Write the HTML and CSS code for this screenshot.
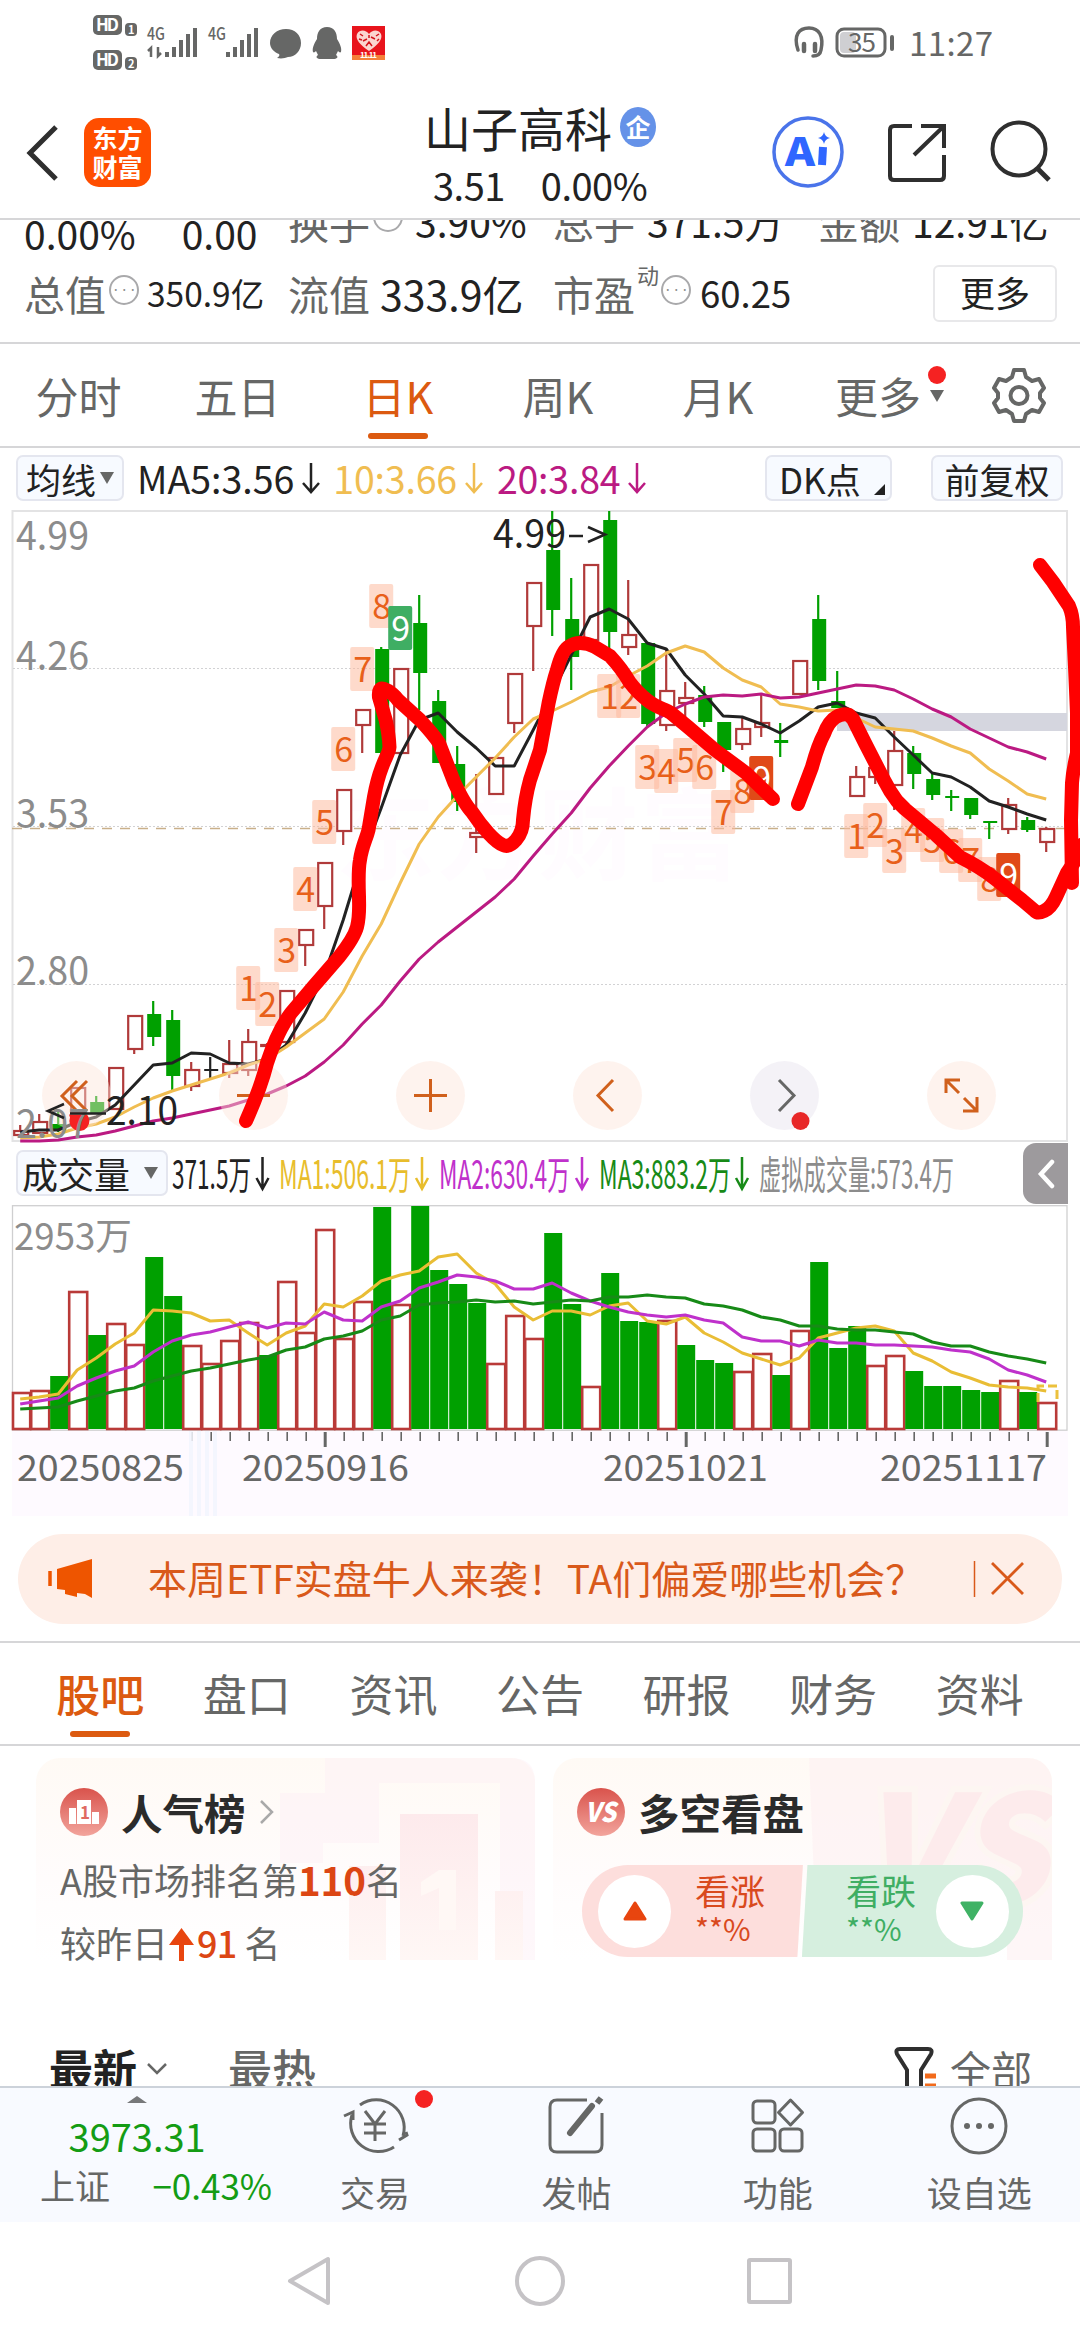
FILE: index.html
```
<!DOCTYPE html>
<html lang="zh-CN">

<head>
    <meta charset="UTF-8">
    <meta name="viewport" content="width=device-width, initial-scale=1.0">
    <title>山子高科 3.51</title>
    <link rel="stylesheet" href="styles.css">
</head>

<body>
    <!-- Status bar -->
    <div class="status">
        <svg class="status-left" width="300" height="60" viewBox="90 10 300 60">
            <g fill="#666766">
                <rect x="93" y="15" width="29" height="20" rx="5" />
                <rect x="125" y="23" width="12" height="13" rx="4" />
                <rect x="93" y="50" width="29" height="20" rx="5" />
                <rect x="125" y="57" width="12" height="13" rx="4" />
            </g>
            <g fill="#fff" font-weight="700">
                <text x="96" y="31" font-size="17" textLength="23">HD</text>
                <text x="128" y="34" font-size="11">1</text>
                <text x="96" y="66" font-size="17" textLength="23">HD</text>
                <text x="128" y="68" font-size="11">2</text>
            </g>
            <g fill="#666766" font-weight="500" font-size="17">
                <text x="147" y="40" textLength="18" lengthAdjust="spacingAndGlyphs">4G</text>
                <text x="208" y="40" textLength="18" lengthAdjust="spacingAndGlyphs">4G</text>
            </g>
            <g stroke="#666766" stroke-width="4">
                <path d="M167 57v-5M174 57V47M181 57V40M188 57V34M195 57V28" />
                <path d="M228 57v-5M235 57V47M242 57V40M249 57V34M256 57V28" />
            </g>
            <path d="M151 57V48l-3 3M158 47v9l3-3" fill="none" stroke="#666766" stroke-width="2.5" />
            <path d="M286 29c9 0 15 6 15 14s-6 14-13 14c-3 1-6 2-11 1 2-1 3-3 2-4-5-2-9-6-9-11 0-8 7-14 16-14z" fill="#666766" />
            <path d="M327 27c7 0 10 5 10 12 3 5 5 9 4 13-1 1-2 0-3-1l-2 4c3 2 1 4-3 4h-12c-4 0-6-2-3-4l-2-4c-1 1-2 2-3 1-1-4 1-8 4-13 0-7 3-12 10-12z" fill="#666766" />
            <rect x="352" y="26" width="33" height="34" fill="#e8141c" />
            <rect x="352" y="55" width="33" height="5" fill="#f5803a" />
            <path d="M369 51c-9-6-14-12-12-17 3-5 9-4 12 0 3-4 9-5 12 0 2 5-3 11-12 17z" fill="#fbd5d0" />
            <path d="M360 34l3 2M359 39l3 1M363 41l4-2M366 46l3-4 3 4M371 37l4 2M376 36l3-2M377 41l2-2M369 35v3" stroke="#d3121a" stroke-width="1.500" fill="none" />
            <text x="360" y="58" font-size="8" font-weight="700" fill="#fff" textLength="17">11.11</text>
        </svg>
        <svg class="status-right" width="210" height="50" viewBox="785 18 210 50">
            <g fill="none" stroke="#666766" stroke-width="3.5" stroke-linecap="round">
                <path d="M798 50c-5-15 1-22 11-22s15 8 12 22q-1 6-8 6" />
                <path d="M804 44v7M815 44v7" stroke-width="4.500" />
                <rect x="837" y="29" width="48" height="27" rx="7" stroke-width="3" />
                <path d="M892 37v12" stroke-width="4" />
            </g>
            <rect x="840" y="32" width="16" height="21" rx="4" fill="#cfcfd2" />
            <text x="848" y="52" font-size="26" fill="#666766" textLength="28">35</text>
            <text x="909" y="56" font-size="33" fill="#666766" textLength="84">11:27</text>
        </svg>
    </div>

    <!-- Title bar -->
    <header class="title-bar">
        <svg class="back" width="34" height="58" viewBox="0 0 34 58">
            <path d="M30 3L4 29l26 26" fill="none" stroke="#2f2f2f" stroke-width="5" />
        </svg>
        <div class="logo">东方<br>财富</div>
        <div class="stock">
            <div class="stock-name">山子高科<span class="stock-badge">企</span></div>
            <div class="stock-price"><span>3.51</span><span>0.00%</span></div>
        </div>
        <svg class="title-icons" width="290" height="76" viewBox="770 114 290 76">
            <circle cx="808" cy="152" r="34" fill="#fff" stroke="#4a74ea" stroke-width="3.5" />
            <text x="785" y="166" font-size="39" font-weight="900" fill="#2f66ff" textLength="30" lengthAdjust="spacingAndGlyphs">A</text>
            <path d="M823 147l-1 18" stroke="#2f66ff" stroke-width="8" />
            <path d="M824 132q1 5 6 6-5 1-6 6-1-5-6-6 5-1 6-6z" fill="#2f66ff" />
            <g fill="none" stroke="#2f2f2f" stroke-width="4">
                <path d="M912 126h-18q-4 0-4 4v46q0 4 4 4h46q4 0 4-4v-21M921 126h23v22M943 127l-29 28" />
                <circle cx="1019" cy="149" r="26.5" />
                <path d="M1037 168l12 12" stroke-width="5" />
            </g>
        </svg>
    </header>

    <!-- Quote numbers, partly scrolled under the title bar -->
    <section class="quote">
        <div class="quote-row quote-row-top">
            <div class="q1"><b class="lift">0.00%</b><b class="lift gap-45">0.00</b></div>
            <div class="q2"><i>换手</i><span class="info-dot"></span><b>3.90%</b></div>
            <div class="q3"><i>总手</i><b>371.5万</b></div>
            <div class="q4"><i>金额</i><b>12.91亿</b></div>
        </div>
        <div class="quote-row">
            <div class="q1"><i>总值</i><span class="info-dot">•••</span><b class="small">350.9亿</b></div>
            <div class="q2"><i>流值</i><b class="wide">333.9亿</b></div>
            <div class="q3"><i>市盈</i><sup>动</sup><span class="info-dot">•••</span><b class="mid">60.25</b></div>
            <div class="q4"><span class="more-button">更多</span></div>
        </div>
    </section>

    <!-- Period tabs -->
    <nav class="period-tabs">
        <span>分时</span>
        <span>五日</span>
        <span class="active">日K</span>
        <span>周K</span>
        <span>月K</span>
        <span class="with-arrow">更多<em class="tri-down"></em><em class="red-dot"></em></span>
        <svg width="54" height="56" viewBox="0 0 54 56" fill="none" stroke="#666766" stroke-width="4" stroke-linejoin="round">
            <path d="M22 3h10l2 7 6 4 7-2 5 9-4 5v5l4 5-5 9-7-2-6 4-2 7H22l-2-7-6-4-7 2-5-9 4-5v-5l-4-5 5-9 7 2 6-4z" />
            <circle cx="27" cy="28.500" r="8.500" />
        </svg>
    </nav>

    <!-- Moving average legend -->
    <div class="ma-bar">
        <span class="chip chip-ma">均线<em class="tri-down"></em></span>
        <span class="ma ma5">MA5:3.56<svg width="18" height="32" viewBox="0 0 18 32"><path d="M9 1v28M1 21l8 9 8-9" /></svg></span>
        <span class="ma ma10">10:3.66<svg width="18" height="32" viewBox="0 0 18 32"><path d="M9 1v28M1 21l8 9 8-9" /></svg></span>
        <span class="ma ma20">20:3.84<svg width="18" height="32" viewBox="0 0 18 32"><path d="M9 1v28M1 21l8 9 8-9" /></svg></span>
        <span class="chip chip-dk">DK点<em class="corner"></em></span>
        <span class="chip chip-fq">前复权</span>
    </div>

    <svg id="priceChart" class="chart" width="1080" height="637" viewBox="0 506 1080 637"></svg>

    <!-- Volume legend -->
    <div class="vol-bar">
        <span class="chip chip-vol">成交量<em class="tri-down"></em></span>
        <svg width="790" height="60" viewBox="170 1143 790 60" font-size="39">
            <text x="172" y="1189" fill="#222" textLength="79" lengthAdjust="spacingAndGlyphs">371.5万</text>
            <text x="279" y="1189" fill="#e8bd2c" textLength="132" lengthAdjust="spacingAndGlyphs">MA1:506.1万</text>
            <text x="439" y="1189" fill="#bf31cb" textLength="131" lengthAdjust="spacingAndGlyphs">MA2:630.4万</text>
            <text x="599" y="1189" fill="#178a17" textLength="132" lengthAdjust="spacingAndGlyphs">MA3:883.2万</text>
            <text x="759" y="1189" fill="#8c8c8c" textLength="195" lengthAdjust="spacingAndGlyphs">虚拟成交量:573.4万</text>
            <g fill="none" stroke-width="2.5">
                <path d="M262.500 1157v32M256.500 1178l6 11 6-11" stroke="#222" />
                <path d="M422 1157v32M416 1178l6 11 6-11" stroke="#e8bd2c" />
                <path d="M582 1157v32M576 1178l6 11 6-11" stroke="#bf31cb" />
                <path d="M742 1157v32M736 1178l6 11 6-11" stroke="#178a17" />
            </g>
        </svg>
        <span class="collapse">
            <svg width="18" height="30" viewBox="0 0 18 30"><path d="M15 3L4 15l11 12" fill="none" stroke="#fff" stroke-width="4.500" stroke-linecap="round" /></svg>
        </span>
    </div>

    <svg id="volumeChart" class="chart" width="1080" height="311" viewBox="0 1205 1080 311"></svg>

    <!-- Notice -->
    <div class="notice">
        <svg width="46" height="40" viewBox="48 1559 46 40">
            <path d="M57 1569l35-10v39l-7-4-8-1v4l-12-3v-4l-8-1z" fill="#ee5500" />
            <path d="M50 1571v15" stroke="#ee5500" stroke-width="3.500" />
        </svg>
        <p>本周ETF实盘牛人来袭！TA们偏爱哪些机会？</p>
        <svg width="52" height="38" viewBox="973 1560 52 38" fill="none" stroke="#d9591a">
            <path d="M974.500 1561v36" stroke-width="1.500" />
            <path d="M992 1563l31 31M1023 1563l-31 31" stroke-width="2.800" />
        </svg>
    </div>

    <!-- Content tabs -->
    <nav class="content-tabs">
        <span class="active">股吧</span>
        <span>盘口</span>
        <span>资讯</span>
        <span>公告</span>
        <span>研报</span>
        <span>财务</span>
        <span>资料</span>
    </nav>

    <section class="cards">
        <div class="card card-rank">
            <svg class="card-art" width="290" height="202" viewBox="0 0 290 202">
                <path d="M80 0h186q24 0 24 24v178H255V25H134v60H78v20H35V35h45z" fill="#fdeef6" opacity=".4" />
                <path d="M155 56h78v146h-78zM104 108h37v94h-37zM250 133h28v69h-28z" fill="url(#artFade)" />
                <path d="M176 124l18-12h17v60h-17v-42l-18 8z" fill="#fff8f5" />
            </svg>
            <h3>
                <svg width="48" height="48" viewBox="0 0 48 48">
                    <defs>
                        <linearGradient id="redBall" x1="0" y1="0" x2="0" y2="1">
                            <stop offset="0" stop-color="#d9534c" />
                            <stop offset="1" stop-color="#f2a49c" />
                        </linearGradient>
                        <linearGradient id="artFade" x1="0" y1="0" x2="0" y2="1">
                            <stop offset="0" stop-color="#fdeaec" />
                            <stop offset="1" stop-color="#fff7f5" />
                        </linearGradient>
                    </defs>
                    <circle cx="24" cy="24" r="24" fill="url(#redBall)" />
                    <path d="M9 20h7v16H9zM17 12h14v24H17zM32 24h7v12h-7z" fill="#fff" />
                    <text x="20" y="31" font-size="17" font-weight="700" fill="#e06a62">1</text>
                </svg>
                人气榜
                <svg class="go" width="15" height="26" viewBox="0 0 15 26"><path d="M2 2l11 11L2 24" fill="none" stroke="#a9a9a9" stroke-width="2.500" /></svg>
            </h3>
            <p>A股市场排名第<strong>110</strong>名</p>
            <p>较昨日<svg class="up" width="25" height="34" viewBox="0 0 25 34"><path d="M12.500 0L25 17H15v16h-5V17H0z" fill="#e8450f" /></svg><strong>91</strong>&nbsp;名</p>
        </div>
        <div class="card card-vote">
            <svg class="card-art" width="243" height="202" viewBox="0 0 243 202">
                <path d="M0 0h243v202h-45V120H5z" fill="#fdf0f1" opacity=".6" />
                <text x="48" y="146" font-size="150" font-weight="900" font-style="italic" fill="#fdebec" stroke="#fdf6f2" stroke-width="12" paint-order="stroke" textLength="190" lengthAdjust="spacingAndGlyphs">VS</text>
            </svg>
            <h3>
                <svg width="48" height="48" viewBox="0 0 48 48">
                    <circle cx="24" cy="24" r="24" fill="url(#redBall)" />
                    <text x="8" y="34" font-size="27" font-weight="900" font-style="italic" fill="#fff" textLength="31" lengthAdjust="spacingAndGlyphs">VS</text>
                </svg>
                多空看盘
            </h3>
            <div class="vote">
                <div class="vote-up">
                    <span class="ball"><svg width="24" height="20" viewBox="0 0 24 20"><path d="M12 2l10 16H2z" fill="#e8450f" stroke="#e8450f" stroke-width="3" stroke-linejoin="round" /></svg></span>
                    <div>看涨<br><small>**%</small></div>
                </div>
                <div class="vote-down">
                    <div>看跌<br><small>**%</small></div>
                    <span class="ball"><svg width="24" height="20" viewBox="0 0 24 20"><path d="M12 18L2 2h20z" fill="#3fb265" stroke="#3fb265" stroke-width="3" stroke-linejoin="round" /></svg></span>
                </div>
            </div>
        </div>
    </section>

    <!-- Post list header, cut by the bottom bar -->
    <div class="sort-bar">
        <b>最新</b>
        <svg class="sort-arrow" width="22" height="14" viewBox="0 0 22 14"><path d="M2 2l9 9 9-9" fill="none" stroke="#666766" stroke-width="2.500" /></svg>
        <span class="hot">最热</span>
        <svg class="filter" width="44" height="46" viewBox="0 0 44 46">
            <path d="M13 44V23L3 7q-2-5 3-5h28q5 0 3 5L27 23v21" fill="none" stroke="#2f2f2f" stroke-width="4" />
            <path d="M31 29h11M31 39h11" stroke="#f26a1b" stroke-width="5" />
        </svg>
        <span class="all">全部</span>
    </div>

    <!-- Bottom bar -->
    <footer class="bottom-bar">
        <div class="index">
            <em class="tri-up"></em>
            <div class="index-value">3973.31</div>
            <div class="index-row"><span>上证</span><b>−0.43%</b></div>
        </div>
        <div class="tool">
            <svg width="100" height="64" viewBox="325 2092 100 64" fill="none" stroke="#666766" stroke-width="3">
                <path d="M360 2105a28 28 0 0 1 43 31M394 2147a28 28 0 0 1-42-32M344 2116l9-4v8M399 2140l8-5-1-3" />
                <path d="M365 2111l10 13 10-13M375 2124v17M364 2124h22M364 2133h22" />
            </svg>
            <span>交易</span>
            <em class="red-dot"></em>
        </div>
        <div class="tool">
            <svg width="64" height="64" viewBox="545 2092 64 64" fill="none" stroke="#666766" stroke-width="3">
                <path d="M588 2100h-30q-7 0-7 7v38q0 7 7 7h38q7 0 7-7v-32" />
                <path d="M571 2133l22-27" stroke-width="6" stroke-linecap="round" />
                <path d="M598 2103l4-5" stroke-width="6" />
            </svg>
            <span>发帖</span>
        </div>
        <div class="tool">
            <svg width="64" height="64" viewBox="747 2092 64 64" fill="none" stroke="#666766" stroke-width="3" stroke-linejoin="round">
                <rect x="754" y="2101" width="22" height="22" rx="4" />
                <rect x="754" y="2129" width="22" height="22" rx="4" />
                <rect x="781" y="2129" width="22" height="22" rx="4" />
                <path d="M791.500 2100l12 12.500-12 12.500-12-12.500z" />
            </svg>
            <span>功能</span>
        </div>
        <div class="tool">
            <svg width="64" height="64" viewBox="947 2092 64 64">
                <circle cx="979" cy="2126" r="27" fill="none" stroke="#666766" stroke-width="3" />
                <g fill="#666766">
                    <circle cx="967" cy="2126" r="3" />
                    <circle cx="979" cy="2126" r="3" />
                    <circle cx="991" cy="2126" r="3" />
                </g>
            </svg>
            <span>设自选</span>
        </div>
    </footer>

    <div class="system-nav">
        <svg width="540" height="60" viewBox="270 2251 540 60" fill="none" stroke="#c5c3c6" stroke-width="4" stroke-linejoin="round">
            <path d="M328 2259v44l-38-22z" />
            <circle cx="540" cy="2281" r="23" />
            <rect x="749" y="2260" width="41" height="42" rx="1" />
        </svg>
    </div>

    <script src="chart.js"></script>
</body>

</html>
```

FILE: styles.css
```
* {
    box-sizing: border-box;
}

body {
    font-family: "Noto Sans CJK SC", "Noto Sans", sans-serif;
    margin: 0;
    width: 1080px;
    height: 2340px;
    background-color: #fff;
    color: #222;
    overflow: hidden;
    display: flex;
    flex-direction: column;
    white-space: nowrap;
}

body > * {
    flex-shrink: 0;
}

svg {
    display: block;
    flex-shrink: 0;
}

i,
em {
    font-style: normal;
}

b {
    font-weight: normal;
}

/* Status bar */
.status {
    height: 90px;
    padding: 10px 85px 0 90px;
    display: flex;
    justify-content: space-between;
}

.status-right {
    margin-top: 8px;
}

/* Title bar */
.title-bar {
    height: 130px;
    border-bottom: 2px solid #d6d6d8;
    display: flex;
    padding: 0 20px 0 26px;
}

.back {
    margin-top: 34px;
}

.logo {
    width: 67px;
    height: 69px;
    margin: 28px 0 0 24px;
    padding-top: 5px;
    border-radius: 15px;
    background-color: #ff4e00;
    color: #fff;
    font-size: 25px;
    font-weight: 700;
    line-height: 29px;
    text-align: center;
}

.stock {
    margin-left: 273px;
    width: 232px;
}

.stock-name {
    display: flex;
    align-items: center;
    height: 74px;
    font-size: 47px;
    line-height: 74px;
}

.stock-badge {
    width: 40px;
    height: 40px;
    margin-left: 8px;
    border-radius: 50%;
    background-color: #6592e8;
    color: #fff;
    font-size: 25px;
    font-weight: 700;
    line-height: 38px;
    text-align: center;
}

.stock-price {
    display: flex;
    gap: 36px;
    padding-left: 9px;
    font-size: 38px;
    line-height: 42px;
    letter-spacing: -0.500px;
}

.title-icons {
    margin: 24px 0 0 114px;
}

/* Quote numbers */
.quote {
    height: 124px;
    border-bottom: 2px solid #d6d6d8;
    overflow: hidden;
}

.quote-row {
    height: 60px;
    margin-top: 5px;
    display: grid;
    grid-template-columns: 264px 265px 265px 1fr;
    padding-left: 24px;
    line-height: 60px;
}

.quote-row-top {
    margin-top: -42px;
    margin-bottom: 25px;
}

.quote-row > div {
    display: flex;
    align-items: center;
    font-size: 39px;
}

.quote i {
    font-size: 41px;
    color: #666766;
}

.quote b {
    margin-left: 12px;
}

.quote .wide {
    font-size: 41px;
    margin-left: 10px;
}

.quote .lift {
    margin-left: 0;
    padding-top: 25px;
}

.quote .gap-45 {
    margin-left: 46px;
}

.quote .small {
    font-size: 33.5px;
    margin-left: 8px;
}

.quote .mid {
    font-size: 36.5px;
    margin-left: 9px;
}

.quote sup {
    font-size: 22px;
    line-height: 22px;
    align-self: flex-start;
    color: #666766;
    margin: 0 -1px 0 2px;
}

.info-dot {
    width: 30px;
    height: 30px;
    margin-left: 3px;
    margin-top: -7px;
    border: 2px solid #a9a9ab;
    border-radius: 50%;
    color: #8c8c8c;
    font-size: 9px;
    line-height: 25px;
    letter-spacing: -0.500px;
    text-align: center;
}

.more-button {
    width: 124px;
    height: 57px;
    margin-left: 115px;
    border: 2px solid #e8e8ea;
    border-radius: 6px;
    font-size: 35px;
    line-height: 50px;
    text-align: center;
}

/* Tabs */
.period-tabs {
    height: 104px;
    border-bottom: 2px solid #d6d6d8;
    display: grid;
    grid-template-columns: 157px 161px repeat(4, 160px) 1fr;
    font-size: 43px;
    line-height: 102px;
    color: #666766;
    text-align: center;
}

.period-tabs svg {
    margin: 23px 0 0 34px;
}

.active {
    color: #dc5a10;
    position: relative;
}

.active::after {
    content: "";
    position: absolute;
    left: 50%;
    bottom: 7px;
    width: 60px;
    height: 6px;
    margin-left: -30px;
    border-radius: 3px;
    background-color: #dc5a10;
}

.with-arrow {
    position: relative;
}

.with-arrow .tri-down {
    position: absolute;
    left: 132px;
    top: 46px;
}

.red-dot {
    position: absolute;
    width: 18px;
    height: 18px;
    border-radius: 50%;
    background-color: #f52222;
}

.with-arrow .red-dot {
    left: 130px;
    top: 22px;
}

.tri-down {
    display: inline-block;
    border: 7.500px solid transparent;
    border-top: 12px solid #666766;
    border-bottom: 0;
}

.tri-up {
    border: 10px solid transparent;
    border-bottom: 7px solid #77787a;
    border-top: 0;
}

/* Chips and moving average legend */
.chip {
    height: 46px;
    border: 2px solid #e4e6ef;
    border-radius: 7px;
    background-color: #f7faff;
    font-size: 35px;
    line-height: 41px;
    display: flex;
    align-items: center;
    position: relative;
}

.ma-bar {
    height: 58px;
    padding: 7px 17px 0 16px;
    display: flex;
}

.chip-ma {
    width: 108px;
    padding-left: 8px;
    gap: 4px;
}

.chip-dk {
    width: 127px;
    margin-left: auto;
    padding-left: 12px;
}

.chip-fq {
    width: 132px;
    margin-left: 39px;
    justify-content: center;
}

.corner {
    position: absolute;
    right: 5px;
    bottom: 4px;
    border-left: 11px solid transparent;
    border-bottom: 11px solid #222;
}

.ma {
    display: flex;
    align-items: center;
    height: 46px;
    font-size: 37.5px;
    line-height: 46px;
    fill: none;
    stroke-width: 2.5;
}

.ma svg {
    margin-left: 8px;
}

.ma5 {
    margin-left: 13px;
    stroke: #222;
}

.ma10 {
    margin-left: 13px;
    color: #f0bd51;
    stroke: #f0bd51;
}

.ma20 {
    margin-left: 14px;
    color: #bb1a82;
    stroke: #bb1a82;
}

.ma10,
.ma20 {
    letter-spacing: -0.200px;
}

/* Volume legend */
.vol-bar {
    height: 62px;
    display: flex;
    align-items: flex-start;
    padding-left: 16px;
}

.chip-vol {
    width: 152px;
    margin-top: 7px;
    padding-left: 4px;
    gap: 14px;
    font-size: 36px;
}

.vol-bar > svg {
    margin-left: 2px;
}

.collapse {
    width: 45px;
    height: 61px;
    margin-left: 63px;
    border-radius: 13px 0 0 13px;
    background-color: #9d9a9d;
    display: flex;
    align-items: center;
    justify-content: center;
}

/* Notice */
.notice {
    height: 90px;
    margin: 18px 18px 17px;
    padding: 0 37px 0 30px;
    border-radius: 45px;
    background-color: #feeee7;
    display: flex;
    align-items: center;
    color: #d9591a;
}

.notice p {
    margin: 0 auto 4px 54px;
    font-size: 39px;
    line-height: 86px;
}

/* Content tabs */
.content-tabs {
    height: 105px;
    border-top: 2px solid #d6d6d8;
    border-bottom: 2px solid #d6d6d8;
    padding: 0 27px;
    display: grid;
    grid-template-columns: repeat(7, 1fr);
    font-size: 44px;
    line-height: 100px;
    color: #666766;
    text-align: center;
}

.content-tabs .active {
    font-weight: 500;
}

/* Cards */
.cards {
    height: 291px;
    padding: 12px 28px 0 36px;
    display: flex;
    gap: 18px;
}

.card {
    width: 499px;
    height: 202px;
    padding: 30px 0 0 24px;
    border-radius: 24px 24px 0 0;
    background-image: linear-gradient(#fffaf5, #fffcfc 60%, #fff);
    position: relative;
    overflow: hidden;
}

.card > * {
    position: relative;
}

.card .card-art {
    position: absolute;
    right: 0;
    top: 0;
}

.card h3 {
    margin: 0;
    height: 48px;
    display: flex;
    align-items: center;
    gap: 13px;
    font-size: 41.5px;
    font-weight: 700;
    line-height: 44px;
    color: #2b2b2b;
}

.card-rank {
    overflow: visible;
}

.card p {
    display: flex;
    align-items: center;
    margin: 17px 0 0;
    height: 52px;
    font-size: 36px;
    line-height: 52px;
    color: #666766;
}

.card p + p {
    margin-top: 11px;
}

.card strong {
    color: #dc4614;
    font-size: 38.5px;
}

.card p + p strong {
    font-weight: 500;
    font-size: 36px;
    letter-spacing: -0.800px;
}

.up {
    margin: 6px 3px 0 1px;
}

.vote {
    margin: 29px 0 0 5px;
    width: 441px;
    height: 92px;
    display: flex;
    gap: 4px;
    font-size: 35px;
    line-height: 36px;
}

.vote small {
    font-size: 30px;
}

.vote-up,
.vote-down {
    width: 222px;
    height: 92px;
    display: flex;
    align-items: center;
    gap: 24px;
}

.vote-up > div,
.vote-down > div {
    margin-top: -4px;
}

.vote-up {
    padding-left: 16px;
    border-radius: 46px 0 0 46px;
    background-color: #fddedc;
    color: #d94a1e;
    clip-path: polygon(0 0, 100% 0, 97.5% 100%, 0 100%);
}

.vote-down {
    padding-left: 44px;
    margin-left: -5px;
    gap: 20px;
    border-radius: 0 46px 46px 0;
    background-color: #d6efdf;
    color: #3fae63;
    clip-path: polygon(2.5% 0, 100% 0, 100% 100%, 0 100%);
}

.ball {
    width: 73px;
    height: 73px;
    border-radius: 50%;
    background-color: #fff;
    display: flex;
    align-items: center;
    justify-content: center;
    flex-shrink: 0;
}

/* Sort bar */
.sort-bar {
    height: 49px;
    padding: 0 48px 0 49px;
    display: flex;
    overflow: hidden;
    font-size: 44px;
    line-height: 62px;
    color: #666766;
}

.sort-bar b {
    font-weight: 700;
    color: #222;
}

.sort-arrow {
    margin: 25px 0 0 9px;
}

.hot {
    margin: 0 auto 0 60px;
    font-weight: 500;
}

.filter {
    margin: 10px 12px 0 0;
}

.all {
    font-size: 41px;
}

/* Bottom bar */
.bottom-bar {
    height: 136px;
    border-top: 2px solid #ccd2da;
    background-color: #f8faff;
    display: flex;
    color: #666766;
}

.index {
    width: 275px;
    display: flex;
    flex-direction: column;
    align-items: center;
    padding-top: 8px;
}

.index-value {
    margin-top: 8px;
    font-size: 38px;
    line-height: 50px;
    color: #149c14;
}

.index-row {
    display: flex;
    justify-content: space-between;
    width: 232px;
    margin-left: 38px;
    font-size: 35px;
    line-height: 48px;
}

.index-row b {
    color: #149c14;
}

.tool {
    width: 202px;
    display: flex;
    flex-direction: column;
    align-items: center;
    padding-top: 4px;
    position: relative;
    font-size: 35px;
    line-height: 50px;
}

.tool span {
    margin-top: 11px;
}

.tool .red-dot {
    left: 141px;
    top: 2px;
}

.system-nav {
    height: 118px;
    padding-top: 29px;
    display: flex;
    justify-content: center;
}
```

FILE: chart.js
```
// Bars are 19px apart, 55 trading days are visible
const STEP = 19;
const START = 21.2;
const UP = "#b03a3a";
const DOWN = "#00a000";

const barX = i => START + STEP * i;

// [type, high, top, bottom, low]
const candles = [
    ["r", 1125, 1130, 1135, 1135], ["r", 1114, 1121, 1133, 1133], ["g", 1111, 1124, 1130, 1132],
    ["r", 1087, 1087, 1113, 1113], ["g", 1096, 1102, 1113, 1113], ["r", 1067, 1067, 1109, 1109],
    ["r", 1015, 1015, 1049, 1054], ["g", 1001, 1014, 1037, 1046], ["g", 1010, 1020, 1076, 1091],
    ["r", 1062, 1069, 1086, 1091], ["k", 1057, 1069, 1071, 1078], ["r", 1040, 1063, 1073, 1078],
    ["r", 1029, 1041, 1070, 1076], ["r", 1043, 1044, 1046, 1047], ["r", 990, 990, 1042, 1045],
    ["r", 929, 929, 945, 966], ["r", 862, 862, 906, 929], ["r", 789, 789, 831, 845],
    ["r", 709, 709, 725, 753], ["g", 647, 649, 753, 760], ["r", 668, 668, 753, 753],
    ["g", 595, 623, 673, 710], ["g", 690, 701, 763, 763], ["g", 746, 764, 802, 811],
    ["r", 774, 832, 837, 853], ["r", 757, 757, 794, 794], ["r", 673, 673, 723, 733],
    ["r", 582, 582, 626, 671], ["g", 511, 550, 610, 636], ["g", 578, 619, 657, 690],
    ["r", 564, 564, 640, 640], ["g", 511, 520, 632, 650], ["r", 580, 634, 647, 655],
    ["g", 643, 643, 724, 727], ["r", 650, 690, 725, 731], ["r", 682, 697, 703, 718],
    ["g", 686, 695, 722, 727], ["g", 722, 722, 750, 772], ["r", 717, 728, 744, 750],
    ["r", 693, 722, 727, 737], ["g", 723, 740, 743, 757], ["r", 660, 660, 694, 694],
    ["g", 595, 619, 681, 690], ["g", 671, 701, 708, 708], ["r", 766, 776, 796, 796],
    ["r", 767, 767, 777, 784], ["r", 731, 750, 785, 810], ["g", 746, 753, 774, 789],
    ["g", 773, 779, 795, 800], ["g", 790, 796, 798, 811], ["g", 798, 798, 815, 819],
    ["g", 821, 821, 823, 839], ["r", 798, 804, 829, 834], ["g", 817, 820, 830, 832],
    ["r", 827, 828, 842, 852]
];

const ma5 = [1132, 1130, 1130, 1122, 1117, 1105, 1085, 1065, 1063, 1053, 1054, 1063, 1064, 1059, 1045, 1013, 975, 920, 858, 808, 755, 720, 713, 732, 748, 766, 766, 730, 693, 655, 617, 609, 619, 643, 649, 675, 694, 716, 717, 724, 733, 721, 707, 703, 713, 718, 737, 755, 773, 777, 787, 801, 807, 814, 820];
const ma10 = [1138, 1137, 1134, 1128, 1124, 1117, 1107, 1098, 1091, 1085, 1079, 1073, 1065, 1059, 1047, 1033, 1019, 992, 956, 924, 883, 844, 817, 796, 777, 758, 737, 719, 711, 702, 692, 687, 676, 666, 653, 646, 652, 668, 680, 687, 704, 707, 711, 710, 718, 727, 729, 731, 738, 746, 753, 769, 781, 794, 799];
const ma20 = [1141, 1141, 1140, 1137, 1135, 1131, 1126, 1121, 1118, 1114, 1110, 1106, 1100, 1094, 1086, 1076, 1062, 1045, 1024, 1005, 981, 959, 942, 927, 912, 897, 879, 856, 834, 813, 788, 766, 746, 727, 713, 704, 697, 695, 696, 694, 698, 697, 693, 689, 685, 686, 690, 699, 709, 717, 729, 738, 747, 752, 759];

// [digit, day index, top, style]
const badges = [
    [1, 12, 966], [2, 13, 982], [3, 14, 928], [4, 15, 867], [5, 16, 800], [6, 17, 727], [7, 18, 647], [8, 19, 584], [9, 20, 606, "#3fae63"],
    [1, 31, 674], [2, 32, 674], [3, 33, 745], [4, 34, 749], [5, 35, 738], [6, 36, 745], [7, 37, 790], [8, 38, 769], [9, 39, 756, "#e04a18"],
    [1, 44, 814], [2, 45, 803], [3, 46, 829], [4, 47, 808], [5, 48, 818], [6, 49, 829], [7, 50, 838], [8, 51, 857], [9, 52, 853, "#e04a18"]
];

// Volume bars: colour and top
const volumes = "r1392 r1390 g1376 r1291 g1335 r1323 r1344 g1257 g1296 r1345 r1363 r1340 r1322 g1355 r1281 r1332 r1229 r1338 r1301 g1207 r1304 g1206 g1270 g1284 g1303 r1363 r1315 r1338 g1233 g1304 r1386 g1273 g1321 g1322 r1320 g1345 g1360 g1363 r1371 r1353 g1375 r1330 g1262 g1348 g1326 r1365 r1355 g1371 g1386 g1386 g1390 g1392 r1380 g1392 r1402".split(" ");

const volMa1 = [1399, 1397, 1394, 1370, 1358, 1344, 1333, 1310, 1311, 1313, 1321, 1320, 1333, 1345, 1333, 1326, 1304, 1307, 1296, 1281, 1275, 1271, 1257, 1254, 1273, 1284, 1307, 1320, 1311, 1311, 1315, 1306, 1303, 1321, 1324, 1317, 1333, 1342, 1353, 1359, 1365, 1358, 1338, 1333, 1328, 1326, 1331, 1353, 1361, 1372, 1378, 1385, 1387, 1388, 1391];
const volMa2 = [1404, 1401, 1398, 1386, 1378, 1371, 1366, 1352, 1341, 1335, 1332, 1327, 1322, 1328, 1323, 1324, 1312, 1320, 1321, 1307, 1301, 1288, 1282, 1275, 1277, 1281, 1289, 1289, 1283, 1293, 1301, 1307, 1312, 1315, 1317, 1315, 1320, 1323, 1337, 1341, 1341, 1346, 1340, 1343, 1343, 1345, 1345, 1346, 1347, 1350, 1352, 1359, 1370, 1375, 1382];
const volMa3 = [1409, 1408, 1407, 1401, 1396, 1391, 1388, 1381, 1376, 1371, 1368, 1364, 1360, 1357, 1350, 1347, 1339, 1336, 1331, 1320, 1316, 1305, 1303, 1302, 1300, 1302, 1301, 1304, 1302, 1300, 1301, 1297, 1297, 1295, 1297, 1298, 1304, 1306, 1310, 1317, 1320, 1326, 1326, 1329, 1330, 1330, 1332, 1334, 1342, 1346, 1346, 1352, 1356, 1359, 1363];

function polyline(values, color) {
    const points = values.map((y, i) => `${(barX(i) - 1).toFixed(1)},${y}`).join(" ");
    return `<polyline points="${points}" fill="none" stroke="${color}" stroke-width="3" stroke-linejoin="round"/>`;
}

function label(x, y, text, length, color, size) {
    return `<text x="${x}" y="${y}" font-size="${size || 39}" fill="${color}" textLength="${length}" lengthAdjust="spacingAndGlyphs">${text}</text>`;
}

function candle([type, high, top, bottom, low], i) {
    const x = barX(i);
    const color = type === "g" ? DOWN : type === "k" ? "#222" : UP;
    let out = "";
    if (high < top) out += `<path d="M${x - 1} ${high}V${top}" stroke="${color}" stroke-width="2.2"/>`;
    if (low > bottom) out += `<path d="M${x - 1} ${bottom}V${low}" stroke="${color}" stroke-width="2.2"/>`;
    if (type === "r") {
        out += `<rect x="${x - 7}" y="${top + 1}" width="14" height="${Math.max(bottom - top - 1, 1)}" fill="#fff" stroke="${color}" stroke-width="2.2"/>`;
    } else {
        out += `<rect x="${x - 7}" y="${top}" width="14" height="${bottom - top}" fill="${color}"/>`;
    }
    return out;
}

function badge([digit, i, top, fill]) {
    const x = barX(i) - 13;
    return `<rect x="${x}" y="${top}" width="24" height="44" rx="2" fill="${fill || "#fdb89b"}" ${fill ? "" : 'opacity=".52"'}/>` +
        `<text x="${x + 12.5}" y="${top + 35}" font-size="34" text-anchor="middle" fill="${fill ? "#fff" : "#e8601a"}">${digit}</text>`;
}

function drawPrice() {
    const buttons = [76.5, 253.5, 430.5, 607.5, 784.5, 961.5];
    let out = "";
    out += `<rect x="12.500" y="511" width="1054.500" height="630" fill="#fff" stroke="#e3e3e4" stroke-width="2"/>`;
    // watermark
    out += `<text x="335" y="872" font-size="100" font-weight="700" fill="#fffcff" textLength="405">东方财富</text>`;
    out += [668.5, 826.5, 984.5].map(y => `<path d="M13 ${y}H1067" stroke="#d2d2d4" stroke-width="1" stroke-dasharray="2 2"/>`).join("");
    out += `<path d="M12 828.500H1067" stroke="#c9b08a" stroke-width="1.300" stroke-dasharray="10 8"/>`;
    out += `<rect x="837" y="713" width="230" height="18" fill="#d5d6df"/>`;
    out += candles.map(candle).join("");
    out += polyline(ma5, "#222") + polyline(ma10, "#f0bd51") + polyline(ma20, "#bb1a82");
    out += badges.map(badge).join("");

    // floating buttons
    out += buttons.map((x, i) => `<circle cx="${x}" cy="1095.500" r="34.500" fill="${i === 4 ? "#f0ecf4" : "#fce4da"}" opacity="${i === 4 ? 0.7 : 0.45}"/>`).join("");
    out += `<g fill="none" stroke="#d0601c" stroke-width="3">
        <path d="M77 1081l-15 15 15 15M87 1081l-15 15 15 15"/>
        <path d="M237 1095.500h33M414 1095.500h33M430.500 1079v33"/>
        <path d="M613 1080l-15 15.500 15 15.500"/>
        <path d="M946 1093v-13h14M946 1080l13 13M977 1097v14h-14M977 1111l-13-13"/>
    </g>`;
    out += `<path d="M779 1080l15 15.500-15 15.500" fill="none" stroke="#666766" stroke-width="3"/>`;
    out += `<path d="M69 1114.500h18a10 10 0 1 1-17 3z" fill="#f52222"/><circle cx="800.500" cy="1121" r="9" fill="#e82828"/>`;

    // price labels
    out += label(16, 550, "4.99", 73, "#8c8c8c") + label(16, 670, "4.26", 73, "#8c8c8c") + label(16, 828, "3.53", 73, "#8c8c8c");
    out += label(16, 985, "2.80", 73, "#8c8c8c") + label(16, 1138, "2.07", 73, "#8c8c8c");
    out += label(493, 548, "4.99", 73, "#222") + label(106, 1125, "2.10", 72, "#222");
    out += `<path d="M569 536h14M588 527l17 7.500-17 7.500M64 1104l-16 7 16 7M70 1113.500h36" fill="none" stroke="#222" stroke-width="2.600"/>`;

    // hand drawn marks
    out += `<g fill="none" stroke="#f00" stroke-width="14" stroke-linecap="round" stroke-linejoin="round">
        <path d="M246 1121C254 1103 262 1083 267 1063Q278 1030 291 1013L313 987L339 957Q354 938 357 927C360 915 359 905 359 897Q358 870 360 860C362 846 366 840 368.500 830L374 797Q377 780 382 767C386 756 389 753 389.500 747Q389 735 385.700 720L379 697Q378 687 384 689C390 691 396 697 398 700L420 720Q434 735 439 743L454.500 783Q465 805 472 812C482 827 495 842 503 845Q509 848 516 840C522 833 523 824 523 820Q525 798 530 780L540 750L548.600 703Q553 682 557 670C560 658 564 650 568 647Q574 643 580 643Q588 643 595 647L610 656Q622 669 629.500 682Q638 693 647 700C655 707 665 709 671 713L688 727L715 750L746 773L773 799"/>
        <path d="M798 804L812 767Q818 745 824 734Q829 721 836 717Q843 713 849 715L853 719L865 743L884 780Q890 792 897 801L905 809L936 835L960 857Q980 867 994 878L1022 900L1035 911Q1038 914 1044 911Q1051 908 1056 897L1067 873L1075 861L1081 845"/>
        <path d="M1040 565L1053 582L1069 606Q1073 615 1073 627L1075 667L1077 713L1077 753Q1073 770 1072 783L1071 820L1072 883"/>
    </g>`;
    document.getElementById("priceChart").innerHTML = out;
}

function drawVolume() {
    let out = "";
    out += `<rect x="12" y="1431" width="1056" height="85" fill="#fefaff"/>`;
    out += [189, 197, 205, 213].map(x => `<rect x="${x}" y="1431" width="4" height="85" fill="#f4f6fe"/>`).join("");
    out += `<rect x="12.500" y="1205.700" width="1054.500" height="224.500" fill="#fff" stroke="#cfcfd0" stroke-width="1.300"/>`;
    out += label(14, 1250, "2953万", 118, "#8c8c8c", 37);

    const bar = (v, i) => {
        const x = barX(i);
        const top = Number(v.slice(1));
        if (v[0] === "g") {
            return `<rect x="${x - 9}" y="${top}" width="18" height="${1429 - top}" fill="${DOWN}"/>`;
        }
        const left = Math.max(x - 9, 13);
        return `<rect x="${left}" y="${top + 1}" width="${x + 9 - left}" height="${1428 - top}" fill="#fff" stroke="#b93a38" stroke-width="2.600"/>`;
    };
    out += volumes.map(bar).join("");
    out += `<path d="M1038 1402v-16h19v16" fill="none" stroke="#ecc13c" stroke-width="3" stroke-dasharray="9 4"/>`;
    out += polyline(volMa1, "#e9bd35") + polyline(volMa2, "#bf31cb") + polyline(volMa3, "#178a17");

    for (let i = 9; i < 55; i++) {
        const major = i === 16 || i === 35 || i === 54;
        out += `<path d="M${barX(i)} 1432V${major ? 1447 : 1441}" stroke="#666766" stroke-width="${major ? 3 : 1.6}" opacity="${i === 9 ? 0.15 : 1}"/>`;
    }
    out += label(17, 1481, "20250825", 167, "#666766", 36) + label(242, 1481, "20250916", 167, "#666766", 36);
    out += label(603, 1481, "20251021", 165, "#666766", 36) + label(880, 1481, "20251117", 167, "#666766", 36);
    document.getElementById("volumeChart").innerHTML = out;
}

drawPrice();
drawVolume();
```
